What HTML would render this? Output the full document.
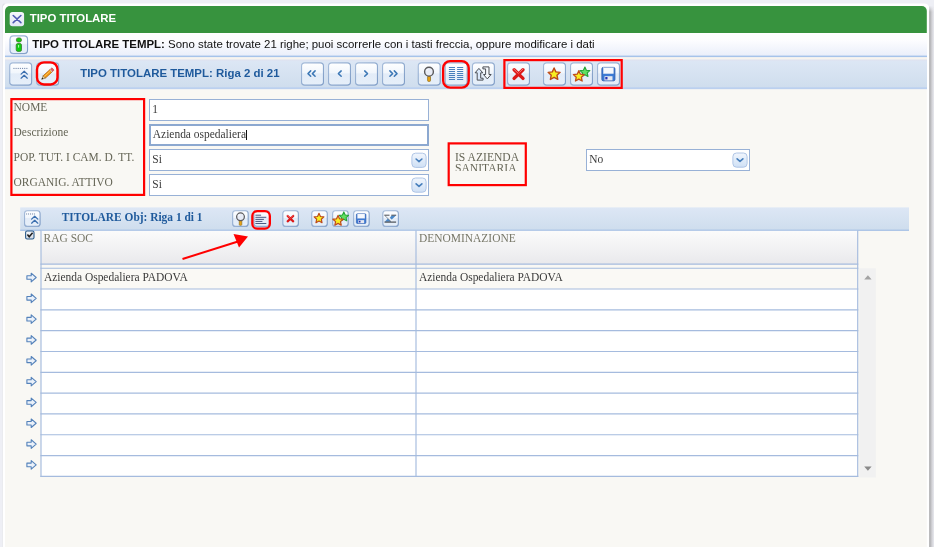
<!DOCTYPE html>
<html lang="it">
<head>
<meta charset="utf-8">
<title>TIPO TITOLARE</title>
<style>
*{box-sizing:border-box;margin:0;padding:0}
html,body{width:934px;height:547px;overflow:hidden}
body{background:#eeeff5;position:relative;font-family:"Liberation Sans",Arial,sans-serif;font-size:11.45px;color:#000}
.abs{position:absolute}
#root{position:absolute;left:0;top:0;width:934px;height:547px;overflow:hidden;will-change:transform}
#title{left:29.7px;top:10.7px;color:#fff;font-weight:bold;font-size:11.4px;line-height:15px;white-space:nowrap}
#infotxt{left:32.3px;top:36.7px;font-size:11.44px;line-height:15px;white-space:nowrap;color:#111}
#tbt{left:80.2px;top:65.9px;font-weight:bold;font-size:11.45px;line-height:15px;color:#1f5a9c;white-space:nowrap}
.sf{font-family:"Liberation Serif","Times New Roman",serif;font-size:11.46px}
.lbl{position:absolute;line-height:13px;color:#666657;white-space:nowrap}
.inp{position:absolute;background:#fff;border:1px solid #98b1d6;line-height:18px;color:#3a3a3a;padding-left:2.3px;white-space:nowrap;overflow:hidden}
#stbt{left:61.7px;top:210.2px;font-weight:bold;font-size:11.42px;line-height:14px;color:#1f5a9c;white-space:nowrap}
#ov{position:absolute;left:0;top:0}
.up{display:inline-block;transform:translateY(-.3px)}
</style>
</head>
<body>
<div id="root">
<svg class="abs" style="left:0;top:0" width="934" height="547" viewBox="0 0 934 547"><defs><linearGradient id="bg" x1="0" y1="0" x2="0" y2="1"><stop offset="0" stop-color="#ffffff"/><stop offset=".45" stop-color="#f1f6fc"/><stop offset=".5" stop-color="#e3ecf8"/><stop offset="1" stop-color="#e6eff9"/></linearGradient><linearGradient id="dg" x1="0" y1="0" x2="0" y2="1"><stop offset="0" stop-color="#f1f6fd"/><stop offset="1" stop-color="#cfe0f5"/></linearGradient><linearGradient id="cg" x1="0" y1="0" x2="0" y2="1"><stop offset="0" stop-color="#f6f7fd"/><stop offset="1" stop-color="#e2e6f6"/></linearGradient><linearGradient id="ig" x1="0" y1="0" x2="0" y2="1"><stop offset="0" stop-color="#ffffff"/><stop offset=".3" stop-color="#fdfdff"/><stop offset="1" stop-color="#e9eefa"/></linearGradient><linearGradient id="tg" x1="0" y1="0" x2="0" y2="1"><stop offset="0" stop-color="#dde7f5"/><stop offset="1" stop-color="#cedded"/></linearGradient><linearGradient id="hg" x1="0" y1="0" x2="0" y2="1"><stop offset="0" stop-color="#fbfbfb"/><stop offset="1" stop-color="#e9e9ec"/></linearGradient><linearGradient id="sh" x1="0" y1="0" x2="1" y2="0"><stop offset="0" stop-color="#a2a2a4"/><stop offset=".25" stop-color="#b6b6b9"/><stop offset=".5" stop-color="#cbcbcf"/><stop offset=".75" stop-color="#dcdce1"/><stop offset="1" stop-color="#e7e8ee"/></linearGradient><linearGradient id="st" x1="0" y1="0" x2="0" y2="1"><stop offset="0" stop-color="#eeeff5"/><stop offset=".3" stop-color="#eeeff5"/><stop offset="1" stop-color="#eeeff5" stop-opacity="0"/></linearGradient><linearGradient id="bs" x1="0" y1="0" x2="1" y2="1"><stop offset="0" stop-color="#a6bcda"/><stop offset="1" stop-color="#7e9cc6"/></linearGradient><linearGradient id="kg" x1="0" y1="0" x2="0" y2="1"><stop offset="0" stop-color="#fafbfd"/><stop offset="1" stop-color="#cfd7e3"/></linearGradient></defs>
<rect x="929" y="5" width="5" height="560" fill="url(#sh)"/><rect x="929" y="3" width="5" height="9" fill="url(#st)"/><rect x="2.1" y="3.6" width="4" height="560" rx="4" fill="#dfe0e6"/><rect x="2.7" y="3.4" width="926.5" height="560" rx="5" fill="#ffffff"/><rect x="5" y="88.5" width="921.8" height="470" fill="#f9f8f4"/><path d="M5 33.1 V11 a5 5 0 0 1 5 -5 H921.8 a5 5 0 0 1 5 5 V33.1 Z" fill="#37933e"/>
<rect x="5" y="33" width="922" height="23.5" fill="url(#ig)"/><rect x="5" y="55.6" width="922" height="1.8" fill="#a6c3ea"/><rect x="5" y="57.3" width="922" height="2.4" fill="#f8f4ee"/><rect x="5" y="59.6" width="922" height="29.5" fill="url(#tg)"/><rect x="5" y="59.6" width="922" height="1" fill="#e0e0ee" opacity=".8"/><rect x="5" y="87.3" width="922" height="1.8" fill="#bbd0ef"/>
<rect x="20.2" y="207.4" width="888.8" height="23.3" fill="url(#tg)"/><rect x="20.2" y="229.6" width="888.8" height="1.3" fill="#a9c2e6"/>
<rect x="41.0" y="230.9" width="816.7" height="33.1" fill="url(#hg)"/>
<rect x="41.0" y="268.2" width="816.7" height="20.82" fill="#faf9f5"/>
<rect x="41.0" y="289.02" width="816.7" height="187.38" fill="#ffffff"/>
<line x1="40.4" y1="268.20" x2="858.3000000000001" y2="268.20" stroke="#a5bbde" stroke-width="1.15"/>
<line x1="40.4" y1="289.02" x2="858.3000000000001" y2="289.02" stroke="#a5bbde" stroke-width="1.15"/>
<line x1="40.4" y1="309.84" x2="858.3000000000001" y2="309.84" stroke="#a5bbde" stroke-width="1.15"/>
<line x1="40.4" y1="330.66" x2="858.3000000000001" y2="330.66" stroke="#a5bbde" stroke-width="1.15"/>
<line x1="40.4" y1="351.48" x2="858.3000000000001" y2="351.48" stroke="#a5bbde" stroke-width="1.15"/>
<line x1="40.4" y1="372.30" x2="858.3000000000001" y2="372.30" stroke="#a5bbde" stroke-width="1.15"/>
<line x1="40.4" y1="393.12" x2="858.3000000000001" y2="393.12" stroke="#a5bbde" stroke-width="1.15"/>
<line x1="40.4" y1="413.94" x2="858.3000000000001" y2="413.94" stroke="#a5bbde" stroke-width="1.15"/>
<line x1="40.4" y1="434.76" x2="858.3000000000001" y2="434.76" stroke="#a5bbde" stroke-width="1.15"/>
<line x1="40.4" y1="455.58" x2="858.3000000000001" y2="455.58" stroke="#a5bbde" stroke-width="1.15"/>
<line x1="40.4" y1="476.40" x2="858.3000000000001" y2="476.40" stroke="#a5bbde" stroke-width="1.15"/>
<line x1="40.4" y1="264.1" x2="858.3000000000001" y2="264.1" stroke="#a5bbde" stroke-width="1.15"/>
<line x1="41.0" y1="230.6" x2="41.0" y2="476.95" stroke="#a5bbde" stroke-width="1.15"/>
<line x1="416.0" y1="230.6" x2="416.0" y2="476.95" stroke="#a5bbde" stroke-width="1.15"/>
<line x1="857.7" y1="230.6" x2="857.7" y2="476.95" stroke="#a5bbde" stroke-width="1.15"/>
<rect x="859.3" y="268.3" width="16.5" height="209.2" fill="#f1f1f1"/>
</svg>
<div id="title" class="abs">TIPO TITOLARE</div>
<div id="infotxt" class="abs"><b>TIPO TITOLARE TEMPL:</b> Sono state trovate 21 righe; puoi scorrerle con i tasti freccia, oppure modificare i dati</div>
<div id="tbt" class="abs">TIPO TITOLARE TEMPL: Riga 2 di 21</div>
<div class="lbl sf" style="left:13.6px;top:100.2px;transform:translateY(.5px)">NOME</div>
<div class="lbl sf" style="left:13.6px;top:125.2px;transform:translateY(.5px)">Descrizione</div>
<div class="lbl sf" style="left:13.6px;top:150.2px;transform:translateY(.5px)">POP. TUT. I CAM. D. TT.</div>
<div class="lbl sf" style="left:13.6px;top:175.2px;transform:translateY(.5px)">ORGANIG. ATTIVO</div>
<div class="inp sf" style="left:149px;top:99px;width:280px;height:22px"><span class="up">1</span></div>
<div class="inp sf" style="left:149px;top:124px;width:280px;height:22px;border:2px solid #8ca8d0;padding-left:1.8px;line-height:16.4px"><span class="up">Azienda ospedaliera</span><span style="display:inline-block;width:1px;height:10px;background:#111;vertical-align:-2px"></span></div>
<div class="inp sf" style="left:149px;top:149px;width:280px;height:22px"><span class="up">Si</span></div>
<div class="inp sf" style="left:149px;top:174px;width:280px;height:22px"><span class="up">Si</span></div>
<div class="lbl sf" style="left:455px;top:151.5px;height:19px;overflow:hidden;line-height:11px;white-space:normal;width:70px;font-size:11.6px">IS AZIENDA SANITARIA</div>
<div class="inp sf" style="left:586px;top:149px;width:164px;height:22px"><span class="up">No</span></div>
<div id="stbt" class="abs sf">TITOLARE Obj: Riga 1 di 1</div>
<div class="lbl sf" style="left:43.6px;top:231.6px;color:#777768">RAG SOC</div>
<div class="lbl sf" style="left:419px;top:231.6px;color:#777768">DENOMINAZIONE</div>
<div class="lbl sf" style="left:43.9px;top:271px;color:#3a3a3a;transform:translateY(-.4px)">Azienda Ospedaliera PADOVA</div>
<div class="lbl sf" style="left:418.9px;top:271px;color:#3a3a3a;transform:translateY(-.4px)">Azienda Ospedaliera PADOVA</div>
<svg id="ov" width="934" height="547" viewBox="0 0 934 547"><rect x="9.7" y="12.1" width="14.4" height="14.2" rx="2.8" fill="url(#cg)"/><path d="M13.2 15.5 L20.9 22.7 M20.9 15.5 L13.2 22.7" stroke="#4f5ab4" stroke-width="1.6" stroke-linecap="round" fill="none"/><rect x="16.3" y="18.4" width="1.5" height="1.4" fill="#4f5ab4"/>
<rect x="9.80" y="36.20" width="18.00" height="18.10" rx="3.5" fill="#7f9cc6" opacity=".55"/>
<rect x="10.05" y="35.85" width="17.50" height="17.60" rx="3.5" fill="url(#bg)" stroke="url(#bs)" stroke-width="1.1"/>
<rect x="16.3" y="37.9" width="5.2" height="4.1" rx="2" fill="#12ce12" stroke="#4a7430" stroke-width=".8"/><rect x="16.2" y="43.5" width="5.3" height="7.9" rx="1.6" fill="#12ce12" stroke="#3a7a2c" stroke-width=".8"/><rect x="18.1" y="45" width="1" height="2.6" fill="#b4ffb4"/>
<rect x="9.50" y="63.20" width="22.40" height="22.60" rx="3.2" fill="#7f9cc6" opacity=".55"/>
<rect x="9.75" y="62.85" width="21.90" height="22.10" rx="3.2" fill="url(#bg)" stroke="url(#bs)" stroke-width="1.1"/>
<g transform="translate(9.20,62.30) translate(.4,.3)"><line x1="3.8" y1="5.8" x2="17.8" y2="5.8" stroke="#6c80a4" stroke-width="1" stroke-dasharray="1.1,1.05"/><polyline points="11.5,11.5 14.6,8.6 17.7,11.5" fill="none" stroke="#3a6eae" stroke-width="1.25" stroke-linecap="round" stroke-linejoin="round"/><polyline points="11.5,15.6 14.6,12.7 17.7,15.6" fill="none" stroke="#3a6eae" stroke-width="1.25" stroke-linecap="round" stroke-linejoin="round"/></g>
<rect x="36.50" y="63.20" width="22.40" height="22.60" rx="3.2" fill="#7f9cc6" opacity=".55"/>
<rect x="36.75" y="62.85" width="21.90" height="22.10" rx="3.2" fill="url(#bg)" stroke="url(#bs)" stroke-width="1.1"/>
<g transform="translate(36.20,62.30) translate(.6,.4)"><g transform="translate(10.9,11.1) rotate(-42.5)"><rect x="-4.6" y="-1.6" width="9.4" height="3.2" fill="#f59a14" stroke="#a85e0a" stroke-width=".7"/><rect x="4.8" y="-1.6" width="2.4" height="3.2" rx=".7" fill="#ea5a5a" stroke="#b83c3c" stroke-width=".6"/><rect x="4.1" y="-1.6" width=".9" height="3.2" fill="#d0d0d0"/><polygon points="-4.6,-1.6 -8,0 -4.6,1.6" fill="#ecd09c" stroke="#7a5c28" stroke-width=".6"/><polygon points="-6.6,-.8 -8.5,0 -6.6,.8" fill="#1a1a1a"/><line x1="-4.6" y1="-.3" x2="4.1" y2="-.3" stroke="#ffc455" stroke-width=".9"/></g></g>
<rect x="37.00" y="62.40" width="20.50" height="22.10" rx="7" fill="none" stroke="#f00" stroke-width="2.4"/>
<rect x="301.30" y="63.20" width="22.40" height="22.60" rx="3.2" fill="#7f9cc6" opacity=".55"/>
<rect x="301.55" y="62.85" width="21.90" height="22.10" rx="3.2" fill="url(#bg)" stroke="url(#bs)" stroke-width="1.1"/>
<g transform="translate(301.00,62.30) translate(.3,.5)"><polyline points="9.4,8.1 6.7,10.8 9.4,13.5" fill="none" stroke="#3d78b6" stroke-width="1.5" stroke-linecap="round" stroke-linejoin="round"/><polyline points="13.8,8.1 11.1,10.8 13.8,13.5" fill="none" stroke="#3d78b6" stroke-width="1.5" stroke-linecap="round" stroke-linejoin="round"/></g>
<rect x="328.30" y="63.20" width="22.40" height="22.60" rx="3.2" fill="#7f9cc6" opacity=".55"/>
<rect x="328.55" y="62.85" width="21.90" height="22.10" rx="3.2" fill="url(#bg)" stroke="url(#bs)" stroke-width="1.1"/>
<g transform="translate(328.00,62.30) translate(.3,.5)"><polyline points="12.9,8.1 10.1,10.8 12.9,13.5" fill="none" stroke="#3d78b6" stroke-width="1.5" stroke-linecap="round" stroke-linejoin="round"/></g>
<rect x="355.30" y="63.20" width="22.40" height="22.60" rx="3.2" fill="#7f9cc6" opacity=".55"/>
<rect x="355.55" y="62.85" width="21.90" height="22.10" rx="3.2" fill="url(#bg)" stroke="url(#bs)" stroke-width="1.1"/>
<g transform="translate(355.00,62.30) translate(.3,.5)"><polyline points="9.4,8.1 12.2,10.8 9.4,13.5" fill="none" stroke="#3d78b6" stroke-width="1.5" stroke-linecap="round" stroke-linejoin="round"/></g>
<rect x="382.30" y="63.20" width="22.40" height="22.60" rx="3.2" fill="#7f9cc6" opacity=".55"/>
<rect x="382.55" y="62.85" width="21.90" height="22.10" rx="3.2" fill="url(#bg)" stroke="url(#bs)" stroke-width="1.1"/>
<g transform="translate(382.00,62.30) translate(.3,.5)"><polyline points="7.6,8.1 10.3,10.8 7.6,13.5" fill="none" stroke="#3d78b6" stroke-width="1.5" stroke-linecap="round" stroke-linejoin="round"/><polyline points="12,8.1 14.7,10.8 12,13.5" fill="none" stroke="#3d78b6" stroke-width="1.5" stroke-linecap="round" stroke-linejoin="round"/></g>
<rect x="418.00" y="63.20" width="22.40" height="22.60" rx="3.2" fill="#7f9cc6" opacity=".55"/>
<rect x="418.25" y="62.85" width="21.90" height="22.10" rx="3.2" fill="url(#bg)" stroke="url(#bs)" stroke-width="1.1"/>
<g transform="translate(417.70,62.30) translate(.3,.5)"><rect x="9.6" y="13.2" width="2.9" height="5.4" rx=".9" fill="#eaa212" stroke="#8a6a18" stroke-width=".7"/><circle cx="11" cy="8.9" r="4.4" fill="#e8ecf6" stroke="#5a5a5c" stroke-width="1.4"/><path d="M8.8 8a2.4 2.4 0 0 1 1.8-1.8" fill="none" stroke="#fff" stroke-width="1"/></g>
<rect x="445.00" y="63.20" width="22.40" height="22.60" rx="3.2" fill="#7f9cc6" opacity=".55"/>
<rect x="445.25" y="62.85" width="21.90" height="22.10" rx="3.2" fill="url(#bg)" stroke="url(#bs)" stroke-width="1.1"/>
<g transform="translate(444.70,62.30) translate(.3,.5)"><line x1="3.9" y1="4.70" x2="10.0" y2="4.70" stroke="#3f78b8" stroke-width="0.95"/><line x1="3.9" y1="6.70" x2="10.0" y2="6.70" stroke="#3f78b8" stroke-width="0.95"/><line x1="3.9" y1="8.70" x2="10.0" y2="8.70" stroke="#3f78b8" stroke-width="0.95"/><line x1="3.9" y1="10.70" x2="10.0" y2="10.70" stroke="#3f78b8" stroke-width="0.95"/><line x1="3.9" y1="12.70" x2="10.0" y2="12.70" stroke="#3f78b8" stroke-width="0.95"/><line x1="3.9" y1="14.70" x2="10.0" y2="14.70" stroke="#3f78b8" stroke-width="0.95"/><line x1="3.9" y1="16.70" x2="10.0" y2="16.70" stroke="#3f78b8" stroke-width="0.95"/><line x1="12.1" y1="4.70" x2="18.2" y2="4.70" stroke="#3f78b8" stroke-width="0.95"/><line x1="12.1" y1="6.70" x2="18.2" y2="6.70" stroke="#3f78b8" stroke-width="0.95"/><line x1="12.1" y1="8.70" x2="18.2" y2="8.70" stroke="#3f78b8" stroke-width="0.95"/><line x1="12.1" y1="10.70" x2="18.2" y2="10.70" stroke="#3f78b8" stroke-width="0.95"/><line x1="12.1" y1="12.70" x2="18.2" y2="12.70" stroke="#3f78b8" stroke-width="0.95"/><line x1="12.1" y1="14.70" x2="18.2" y2="14.70" stroke="#3f78b8" stroke-width="0.95"/><line x1="12.1" y1="16.70" x2="18.2" y2="16.70" stroke="#3f78b8" stroke-width="0.95"/></g>
<rect x="472.20" y="63.20" width="22.40" height="22.60" rx="3.2" fill="#7f9cc6" opacity=".55"/>
<rect x="472.45" y="62.85" width="21.90" height="22.10" rx="3.2" fill="url(#bg)" stroke="url(#bs)" stroke-width="1.1"/>
<g transform="translate(471.90,62.30) translate(.3,.5)"><path d="M6.7 5.6 L2.9 10 H5 V17.3 H10.9 V15.4 H8.5 V10 H10.6 Z" fill="#dbe9fb" stroke="#4a4e54" stroke-width="1" stroke-linejoin="round"/><path d="M15.1 16.1 L11.3 11.7 H13.4 V6.1 H10.7 V4.1 H16.8 V11.7 H18.9 Z" fill="#f6f9fd" stroke="#4a4e54" stroke-width="1" stroke-linejoin="round"/></g>
<rect x="507.30" y="63.20" width="22.40" height="22.60" rx="3.2" fill="#7f9cc6" opacity=".55"/>
<rect x="507.55" y="62.85" width="21.90" height="22.10" rx="3.2" fill="url(#bg)" stroke="url(#bs)" stroke-width="1.1"/>
<g transform="translate(507.00,62.30) translate(.3,.5)"><path d="M6.8 6.9 L15.7 15.6 M15.7 6.9 L6.8 15.6" stroke="#dc1818" stroke-width="3.4" stroke-linecap="round" fill="none"/><path d="M6.3 6.1 L11 10.6 M15.8 6.1 L12.4 9.4" stroke="#ff8c8c" stroke-width="1" stroke-linecap="round" fill="none" opacity=".8"/></g>
<rect x="543.30" y="63.20" width="22.40" height="22.60" rx="3.2" fill="#7f9cc6" opacity=".55"/>
<rect x="543.55" y="62.85" width="21.90" height="22.10" rx="3.2" fill="url(#bg)" stroke="url(#bs)" stroke-width="1.1"/>
<g transform="translate(543.00,62.30) translate(.3,.5)"><polygon points="10.80,5.20 12.56,9.07 16.79,9.55 13.65,12.43 14.50,16.60 10.80,14.50 7.10,16.60 7.95,12.43 4.81,9.55 9.04,9.07" fill="#f8ee20" stroke="#bc4818" stroke-width="1.4" stroke-linejoin="round"/></g>
<rect x="570.30" y="63.20" width="22.40" height="22.60" rx="3.2" fill="#7f9cc6" opacity=".55"/>
<rect x="570.55" y="62.85" width="21.90" height="22.10" rx="3.2" fill="url(#bg)" stroke="url(#bs)" stroke-width="1.1"/>
<g transform="translate(570.00,62.30) translate(.3,.5)"><polygon points="14.60,4.20 16.07,7.38 19.55,7.79 16.98,10.17 17.66,13.61 14.60,11.90 11.54,13.61 12.22,10.17 9.65,7.79 13.13,7.38" fill="#62e062" stroke="#24a238" stroke-width="1.1" stroke-linejoin="round"/><polygon points="8.50,7.90 10.09,11.42 13.92,11.84 11.07,14.43 11.85,18.21 8.50,16.30 5.15,18.21 5.93,14.43 3.08,11.84 6.91,11.42" fill="#f8ee20" stroke="#c04c1a" stroke-width="1.3" stroke-linejoin="round"/></g>
<rect x="597.30" y="63.20" width="22.40" height="22.60" rx="3.2" fill="#7f9cc6" opacity=".55"/>
<rect x="597.55" y="62.85" width="21.90" height="22.10" rx="3.2" fill="url(#bg)" stroke="url(#bs)" stroke-width="1.1"/>
<g transform="translate(597.00,62.30) translate(.3,.5)"><rect x="4.6" y="4.6" width="13" height="13.4" rx="1.4" fill="#3c7ad4" stroke="#2c5cae" stroke-width=".9"/><rect x="6" y="4.9" width="10.2" height="6" fill="#f6f8fc" stroke="#c8d4e8" stroke-width=".4"/><rect x="7.2" y="13.4" width="8" height="4.2" fill="#e6e8f0"/><rect x="8" y="14.2" width="2.2" height="2.4" fill="#2434b4"/></g>
<rect x="443.15" y="61.05" width="25.60" height="26.60" rx="7" fill="none" stroke="#f00" stroke-width="2.3"/>
<rect x="504.40" y="60.10" width="117.30" height="27.80" rx="0" fill="none" stroke="#f00" stroke-width="2.2"/>
<rect x="11.40" y="99.10" width="132.70" height="95.80" rx="0" fill="none" stroke="#f00" stroke-width="2.2"/>
<rect x="448.70" y="143.40" width="77.10" height="41.70" rx="0" fill="none" stroke="#f00" stroke-width="2.2"/>
<rect x="411.9" y="153.2" width="14.2" height="14.2" rx="3.6" fill="url(#dg)" stroke="#b0c6e6" stroke-width="1"/><polyline points="416.10,159.00 419.00,161.60 421.90,159.00" fill="none" stroke="#477fbc" stroke-width="1.6" stroke-linecap="round" stroke-linejoin="round"/>
<rect x="411.9" y="178.0" width="14.2" height="14.2" rx="3.6" fill="url(#dg)" stroke="#b0c6e6" stroke-width="1"/><polyline points="416.10,183.80 419.00,186.40 421.90,183.80" fill="none" stroke="#477fbc" stroke-width="1.6" stroke-linecap="round" stroke-linejoin="round"/>
<rect x="732.9" y="153.0" width="14.2" height="14.2" rx="3.6" fill="url(#dg)" stroke="#b0c6e6" stroke-width="1"/><polyline points="737.10,158.80 740.00,161.40 742.90,158.80" fill="none" stroke="#477fbc" stroke-width="1.6" stroke-linecap="round" stroke-linejoin="round"/>
<rect x="24.30" y="211.10" width="16.00" height="16.00" rx="2.8" fill="#7f9cc6" opacity=".55"/>
<rect x="24.55" y="210.75" width="15.50" height="15.50" rx="2.8" fill="url(#bg)" stroke="url(#bs)" stroke-width="1.1"/>
<g transform="translate(24.00,210.20) translate(-3.9,-2.6)"><line x1="6" y1="6.4" x2="15.8" y2="6.4" stroke="#6c80a4" stroke-width="1" stroke-dasharray="1,.95"/><polyline points="11.5,11.5 14.6,8.6 17.7,11.5" fill="none" stroke="#3a6eae" stroke-width="1.25" stroke-linecap="round" stroke-linejoin="round"/><polyline points="11.5,15.6 14.6,12.7 17.7,15.6" fill="none" stroke="#3a6eae" stroke-width="1.25" stroke-linecap="round" stroke-linejoin="round"/></g>
<rect x="232.40" y="211.10" width="16.00" height="16.00" rx="2.8" fill="#7f9cc6" opacity=".55"/>
<rect x="232.65" y="210.75" width="15.50" height="15.50" rx="2.8" fill="url(#bg)" stroke="url(#bs)" stroke-width="1.1"/>
<g transform="translate(232.10,210.20) translate(8.4,6.6) scale(.88) translate(-11,-8.9)"><rect x="9.6" y="13.2" width="2.9" height="5.4" rx=".9" fill="#eaa212" stroke="#8a6a18" stroke-width=".7"/><circle cx="11" cy="8.9" r="4.4" fill="#e8ecf6" stroke="#5a5a5c" stroke-width="1.4"/><path d="M8.8 8a2.4 2.4 0 0 1 1.8-1.8" fill="none" stroke="#fff" stroke-width="1"/></g>
<rect x="253.80" y="211.10" width="16.00" height="16.00" rx="2.8" fill="#7f9cc6" opacity=".55"/>
<rect x="254.05" y="210.75" width="15.50" height="15.50" rx="2.8" fill="url(#bg)" stroke="url(#bs)" stroke-width="1.1"/>
<g transform="translate(253.50,210.20)"><line x1="1.9" y1="5.0" x2="7.6" y2="5.0" stroke="#4c5c84" stroke-width="1"/><line x1="1.9" y1="7.1" x2="12.8" y2="7.1" stroke="#4c5c84" stroke-width="1"/><line x1="1.9" y1="9.2" x2="10.4" y2="9.2" stroke="#4c5c84" stroke-width="1"/><line x1="1.9" y1="11.25" x2="8.9" y2="11.25" stroke="#4c5c84" stroke-width="1"/><line x1="1.9" y1="13.3" x2="12.8" y2="13.3" stroke="#4c5c84" stroke-width="1"/></g>
<rect x="282.60" y="211.10" width="16.00" height="16.00" rx="2.8" fill="#7f9cc6" opacity=".55"/>
<rect x="282.85" y="210.75" width="15.50" height="15.50" rx="2.8" fill="url(#bg)" stroke="url(#bs)" stroke-width="1.1"/>
<g transform="translate(282.30,210.20) translate(8.1,8.4) scale(.63) translate(-11.2,-11.2)"><path d="M6.8 6.9 L15.7 15.6 M15.7 6.9 L6.8 15.6" stroke="#dc1818" stroke-width="3.4" stroke-linecap="round" fill="none"/><path d="M6.3 6.1 L11 10.6 M15.8 6.1 L12.4 9.4" stroke="#ff8c8c" stroke-width="1" stroke-linecap="round" fill="none" opacity=".8"/></g>
<rect x="311.50" y="211.10" width="16.00" height="16.00" rx="2.8" fill="#7f9cc6" opacity=".55"/>
<rect x="311.75" y="210.75" width="15.50" height="15.50" rx="2.8" fill="url(#bg)" stroke="url(#bs)" stroke-width="1.1"/>
<g transform="translate(311.20,210.20) translate(7.8,8.3) scale(.82) translate(-10.8,-11.5)"><polygon points="10.80,5.20 12.56,9.07 16.79,9.55 13.65,12.43 14.50,16.60 10.80,14.50 7.10,16.60 7.95,12.43 4.81,9.55 9.04,9.07" fill="#f8ee20" stroke="#bc4818" stroke-width="1.4" stroke-linejoin="round"/></g>
<rect x="332.40" y="211.10" width="16.00" height="16.00" rx="2.8" fill="#7f9cc6" opacity=".55"/>
<rect x="332.65" y="210.75" width="15.50" height="15.50" rx="2.8" fill="url(#bg)" stroke="url(#bs)" stroke-width="1.1"/>
<g transform="translate(332.10,210.20) translate(8.7,8.65) scale(.95) translate(-11.4,-11.5)"><polygon points="14.60,4.20 16.07,7.38 19.55,7.79 16.98,10.17 17.66,13.61 14.60,11.90 11.54,13.61 12.22,10.17 9.65,7.79 13.13,7.38" fill="#62e062" stroke="#24a238" stroke-width="1.1" stroke-linejoin="round"/><polygon points="8.50,7.90 10.09,11.42 13.92,11.84 11.07,14.43 11.85,18.21 8.50,16.30 5.15,18.21 5.93,14.43 3.08,11.84 6.91,11.42" fill="#f8ee20" stroke="#c04c1a" stroke-width="1.3" stroke-linejoin="round"/></g>
<rect x="353.40" y="211.10" width="16.00" height="16.00" rx="2.8" fill="#7f9cc6" opacity=".55"/>
<rect x="353.65" y="210.75" width="15.50" height="15.50" rx="2.8" fill="url(#bg)" stroke="url(#bs)" stroke-width="1.1"/>
<g transform="translate(353.10,210.20) translate(8.05,8.4) scale(.73) translate(-11.1,-11.3)"><rect x="4.6" y="4.6" width="13" height="13.4" rx="1.4" fill="#3c7ad4" stroke="#2c5cae" stroke-width=".9"/><rect x="6" y="4.9" width="10.2" height="6" fill="#f6f8fc" stroke="#c8d4e8" stroke-width=".4"/><rect x="7.2" y="13.4" width="8" height="4.2" fill="#e6e8f0"/><rect x="8" y="14.2" width="2.2" height="2.4" fill="#2434b4"/></g>
<rect x="382.60" y="211.10" width="16.00" height="16.00" rx="2.8" fill="#7f9cc6" opacity=".55"/>
<rect x="382.85" y="210.75" width="15.50" height="15.50" rx="2.8" fill="url(#bg)" stroke="url(#bs)" stroke-width="1.1"/>
<g transform="translate(382.30,210.20)"><polygon points="9.3,5.3 13.7,5.3 9.2,9.6 7.4,7.7" fill="#4a88c8"/><polygon points="5.6,8.2 8.9,11.5 2.4,11.5" fill="#4a88c8"/><line x1="3.6" y1="5.2" x2="10.4" y2="11.6" stroke="#f2f5f9" stroke-width="1.5"/><line x1="2.6" y1="5.4" x2="8.6" y2="11.2" stroke="#5a6470" stroke-width=".7"/><line x1="2" y1="5" x2="7.2" y2="5" stroke="#4a4e54" stroke-width="1"/><line x1="9" y1="5" x2="13.9" y2="5" stroke="#4a4e54" stroke-width="1"/><line x1="2.2" y1="11.9" x2="13.8" y2="11.9" stroke="#4a4e54" stroke-width="1.2"/></g>
<rect x="252.35" y="211.05" width="17.50" height="17.60" rx="5" fill="none" stroke="#f00" stroke-width="2.3"/>
<rect x="25.6" y="231" width="8.4" height="8" rx="1.6" fill="url(#kg)" stroke="#2c5c8c" stroke-width="1.1"/><polyline points="27.4,234.6 29.2,236.7 32.6,232.8" fill="none" stroke="#222" stroke-width="1.6"/>
<path transform="translate(26,272.50)" d="M.9 3.2 H5.2 V.7 L10.2 5 L5.2 9.3 V6.8 H.9 Z" fill="#eaf1fa" stroke="#5482ba" stroke-width="1.1" stroke-linejoin="round"/>
<path transform="translate(26,293.32)" d="M.9 3.2 H5.2 V.7 L10.2 5 L5.2 9.3 V6.8 H.9 Z" fill="#eaf1fa" stroke="#5482ba" stroke-width="1.1" stroke-linejoin="round"/>
<path transform="translate(26,314.14)" d="M.9 3.2 H5.2 V.7 L10.2 5 L5.2 9.3 V6.8 H.9 Z" fill="#eaf1fa" stroke="#5482ba" stroke-width="1.1" stroke-linejoin="round"/>
<path transform="translate(26,334.96)" d="M.9 3.2 H5.2 V.7 L10.2 5 L5.2 9.3 V6.8 H.9 Z" fill="#eaf1fa" stroke="#5482ba" stroke-width="1.1" stroke-linejoin="round"/>
<path transform="translate(26,355.78)" d="M.9 3.2 H5.2 V.7 L10.2 5 L5.2 9.3 V6.8 H.9 Z" fill="#eaf1fa" stroke="#5482ba" stroke-width="1.1" stroke-linejoin="round"/>
<path transform="translate(26,376.60)" d="M.9 3.2 H5.2 V.7 L10.2 5 L5.2 9.3 V6.8 H.9 Z" fill="#eaf1fa" stroke="#5482ba" stroke-width="1.1" stroke-linejoin="round"/>
<path transform="translate(26,397.42)" d="M.9 3.2 H5.2 V.7 L10.2 5 L5.2 9.3 V6.8 H.9 Z" fill="#eaf1fa" stroke="#5482ba" stroke-width="1.1" stroke-linejoin="round"/>
<path transform="translate(26,418.24)" d="M.9 3.2 H5.2 V.7 L10.2 5 L5.2 9.3 V6.8 H.9 Z" fill="#eaf1fa" stroke="#5482ba" stroke-width="1.1" stroke-linejoin="round"/>
<path transform="translate(26,439.06)" d="M.9 3.2 H5.2 V.7 L10.2 5 L5.2 9.3 V6.8 H.9 Z" fill="#eaf1fa" stroke="#5482ba" stroke-width="1.1" stroke-linejoin="round"/>
<path transform="translate(26,459.88)" d="M.9 3.2 H5.2 V.7 L10.2 5 L5.2 9.3 V6.8 H.9 Z" fill="#eaf1fa" stroke="#5482ba" stroke-width="1.1" stroke-linejoin="round"/>
<polygon points="864.2,279.4 867.9,275.3 871.6,279.4" fill="#a3a3a3"/>
<polygon points="864.2,466.6 867.9,470.7 871.6,466.6" fill="#8a8a8a"/>
<line x1="182.5" y1="259" x2="238" y2="241.5" stroke="#f00" stroke-width="2"/><polygon points="248,236.5 233.5,234 239,247.5" fill="#f00"/>
</svg>
</div>
</body>
</html>
